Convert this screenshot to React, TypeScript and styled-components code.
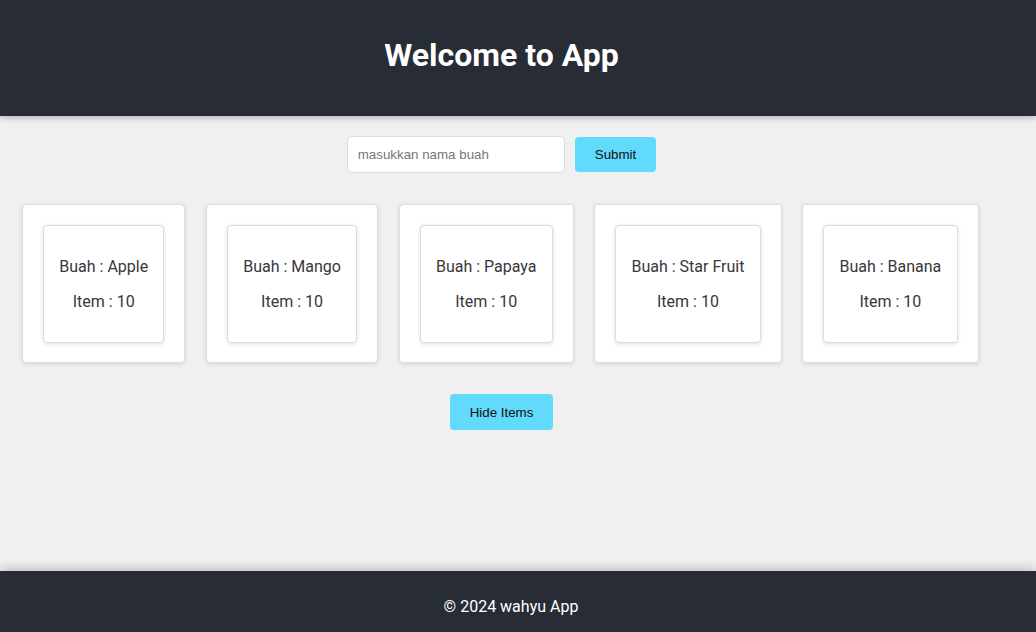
import React from "react";
import styled, { createGlobalStyle } from "styled-components";

const GlobalStyle = createGlobalStyle`
  html, body { margin: 0; padding: 0; }
  body {
    font-family: Roboto, "Noto Sans", sans-serif;
    background: #f0f0f0;
  }
  * { box-sizing: border-box; }
`;

const Page = styled.div`
  min-height: 100vh;
  display: flex;
  flex-direction: column;
  background: #f0f0f0;
`;

const Header = styled.header`
  height: 116px;
  background: #282c34;
  color: #fff;
  display: flex;
  align-items: center;
  justify-content: center;
  padding-right: 33px;
  box-shadow: 0 2px 6px rgba(0, 0, 0, 0.25);
  position: relative;
  z-index: 1;
`;

const Title = styled.h1`
  margin: 0;
  font-size: 32px;
  font-weight: 700;
  line-height: 37px;
  transform: translateY(-3px);
`;

const Main = styled.main`
  flex: 1;
  width: 1003px;
  padding-top: 20px;
  display: flex;
  flex-direction: column;
  align-items: center;
`;

const Form = styled.form`
  display: flex;
  align-items: center;
  gap: 10px;
  margin-bottom: 31px;
`;

const Input = styled.input`
  width: 218px;
  height: 37px;
  padding: 10px;
  border: 1px solid #dcdcdc;
  border-radius: 5px;
  background: #fff;
  font-family: "Liberation Sans", Arial, sans-serif;
  font-size: 13.33px;
  &::placeholder { color: #777; }
`;

const Button = styled.button<{ $h?: number }>`
  height: ${(p) => p.$h ?? 35}px;
  padding: 0 20px;
  border: none;
  border-radius: 4px;
  background: #61dafb;
  color: #111;
  font-family: "Liberation Sans", Arial, sans-serif;
  font-size: 13.33px;
  cursor: pointer;
`;

const CardRow = styled.div`
  align-self: stretch;
  display: flex;
  flex-wrap: wrap;
  gap: 20.5px;
  padding-left: 22px;
  margin-bottom: 31px;
`;

const OuterCard = styled.div`
  background: #fff;
  border: 1px solid #dedede;
  border-radius: 4px;
  padding: 20px 20px 19px;
  box-shadow: 0 1px 4px rgba(0, 0, 0, 0.12);
`;

const InnerCard = styled.div`
  background: #fff;
  border: 1px solid #dcdcdc;
  border-radius: 4px;
  padding: 15px 15.25px 15px;
  box-shadow: 0 1px 4px rgba(0, 0, 0, 0.12);
  color: #383838;
  font-size: 16px;
  text-align: center;
`;

const Line = styled.p`
  margin: 16px 0;
  line-height: 19px;
  white-space: nowrap;
`;

const Footer = styled.footer`
  height: 61px;
  background: #282c34;
  color: #fff;
  display: flex;
  align-items: center;
  justify-content: center;
  padding: 9px 14px 0 0;
  font-size: 16px;
  box-shadow: 0 -3px 10px rgba(0, 0, 0, 0.2);
  position: relative;
`;

const fruits = ["Apple", "Mango", "Papaya", "Star Fruit", "Banana"];

export default function App() {
  return (
    <>
      <GlobalStyle />
      <Page>
        <Header>
          <Title>Welcome to App</Title>
        </Header>
        <Main>
          <Form onSubmit={(e) => e.preventDefault()}>
            <Input placeholder="masukkan nama buah" />
            <Button type="submit">Submit</Button>
          </Form>
          <CardRow>
            {fruits.map((f) => (
              <OuterCard key={f}>
                <InnerCard>
                  <Line>Buah : {f}</Line>
                  <Line>Item : 10</Line>
                </InnerCard>
              </OuterCard>
            ))}
          </CardRow>
          <Button $h={36}>Hide Items</Button>
        </Main>
        <Footer>© 2024 wahyu App</Footer>
      </Page>
    </>
  );
}
